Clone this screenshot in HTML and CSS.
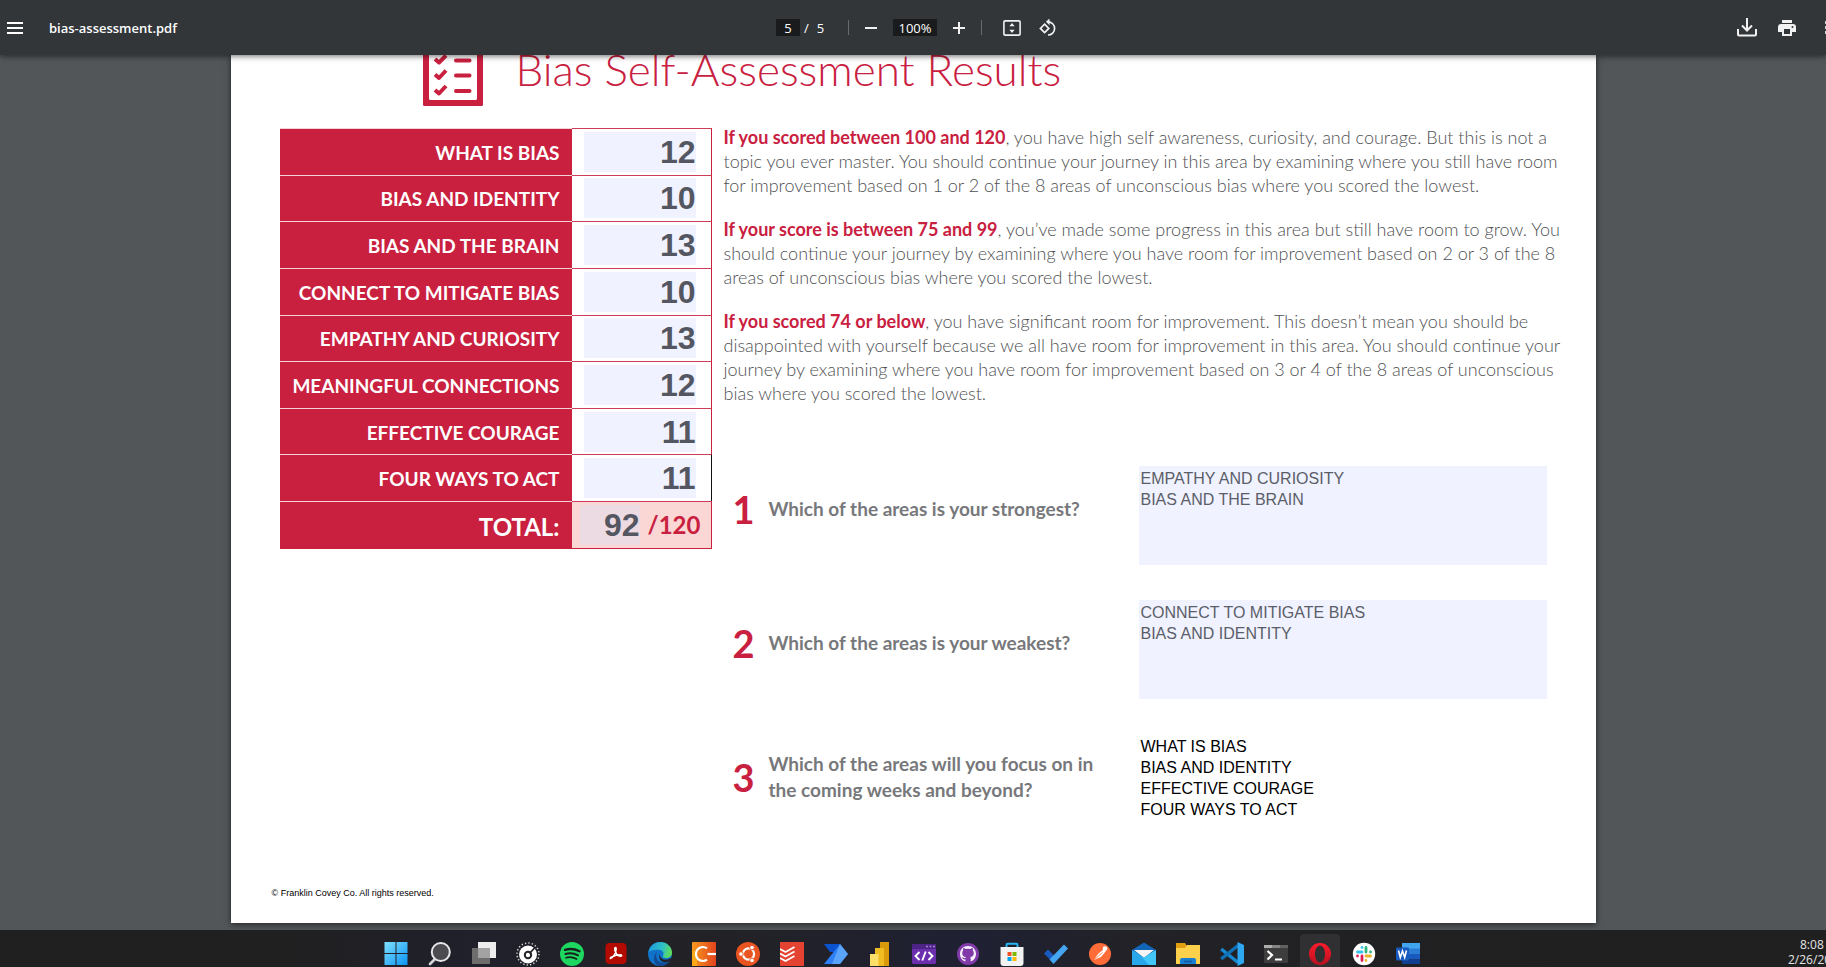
FILE: index.html
```html
<!DOCTYPE html>
<html lang="en">
<head>
<meta charset="utf-8">
<title>bias-assessment.pdf</title>
<link rel="stylesheet" href="styles.css">
</head>
<body>
<header class="toolbar">
  <div class="toolbar-start">
    <button class="tool" aria-label="Menu"><svg width="16" height="12" viewBox="0 0 16 12" fill="#fff"><path d="M0 0h16v2H0zM0 5h16v2H0zM0 10h16v2H0z"/></svg></button>
    <span class="file-name">bias-assessment.pdf</span>
  </div>
  <div class="toolbar-center">
    <input class="page-number" aria-label="Page number" value="5">
    <span class="page-total"><span>/</span><span>5</span></span>
    <span class="separator"></span>
    <button class="tool" aria-label="Zoom out"><svg width="12" height="12" viewBox="0 0 12 12"><path d="M0 6h12" stroke="#f1f1f1" stroke-width="2"/></svg></button>
    <input class="zoom-level" aria-label="Zoom level" value="100%">
    <button class="tool" aria-label="Zoom in"><svg width="12" height="12" viewBox="0 0 12 12"><path d="M0 6h12M6 0v12" stroke="#f1f1f1" stroke-width="2"/></svg></button>
    <span class="separator"></span>
    <button class="tool fit" aria-label="Fit to page"><svg width="18" height="16" viewBox="0 0 18 16"><rect x=".9" y=".9" width="16.2" height="14.2" rx="1.2" fill="none" stroke="#f1f1f1" stroke-width="1.6"/><path d="M9 3l2.6 3.2H6.4zM9 13l2.6-3.2H6.4z" fill="#f1f1f1"/></svg></button>
    <button class="tool rotate" aria-label="Rotate"><svg width="18" height="18" viewBox="0 0 18 18" fill="none" stroke="#f1f1f1" stroke-width="1.7"><path d="M5.6 5.2l4.2 4.2-4.2 4.2-4.2-4.2z"/><path d="M9 2.8a6.6 6.6 0 1 1 0 13.2"/><path d="M10.5-.6v6.8L7 2.8z" fill="#f1f1f1" stroke="none"/></svg></button>
  </div>
  <div class="toolbar-end">
    <button class="tool" aria-label="Download"><svg width="20" height="19" viewBox="0 0 20 19" fill="none" stroke="#f1f1f1" stroke-width="2"><path d="M10 0v12M5 7.5l5 5 5-5"/><path d="M1 11v5.5q0 1 1 1h16q1 0 1-1V11"/></svg></button>
    <button class="tool" aria-label="Print"><svg width="18" height="16" viewBox="0 0 18 16" fill="#f1f1f1"><path d="M4 0h10v3H4z"/><path fill-rule="evenodd" d="M3 4h12q3 0 3 3v5h-4v4H4v-4H0V7q0-3 3-3zm3 5v5h6V9zm8.500-3a1 1 0 1 0 0 2 1 1 0 0 0 0-2z"/></svg></button>
    <button class="tool more" aria-label="More actions"><svg width="2" height="13" viewBox="0 0 2 13" fill="#cfd0d1"><path d="M1 0h1v3H1zM1 5h1v3H1zM1 10h1v3H1z"/></svg></button>
  </div>
</header>

<main class="viewer">
  <article class="sheet">
    <div class="sheet-head">
      <svg class="checklist" width="60" height="51" viewBox="0 0 60 51"><path fill="#c9203f" fill-rule="evenodd" d="M0 0h60v49.500q0 1.500-1.500 1.500h-57Q0 51 0 49.500zM6 0v43.500q0 1.500 1.500 1.500h45q1.500 0 1.500-1.500V0z"/><g fill="none" stroke="#c9203f" stroke-width="4" stroke-linecap="round"><path d="M33 5.500h13.500M33 20.500h13.500M33 36h13.500"/><path stroke-linecap="butt" stroke-linejoin="round" d="M12 4l4 3.500 7-7M12 19.500l4 3.500 7-7.500M12 35l4 3.500 7-7.500"/></g></svg>
      <h1 class="title">Bias Self-Assessment Results</h1>
    </div>

    <div class="content">
      <table class="scores">
        <tbody>
          <tr><th scope="row"><label for="s1">WHAT IS BIAS</label></th><td><input id="s1" value="12"></td></tr>
          <tr><th scope="row"><label for="s2">BIAS AND IDENTITY</label></th><td><input id="s2" value="10"></td></tr>
          <tr><th scope="row"><label for="s3">BIAS AND THE BRAIN</label></th><td><input id="s3" value="13"></td></tr>
          <tr><th scope="row"><label for="s4">CONNECT TO MITIGATE BIAS</label></th><td><input id="s4" value="10"></td></tr>
          <tr><th scope="row"><label for="s5">EMPATHY AND CURIOSITY</label></th><td><input id="s5" value="13"></td></tr>
          <tr><th scope="row"><label for="s6">MEANINGFUL CONNECTIONS</label></th><td><input id="s6" value="12"></td></tr>
          <tr><th scope="row"><label for="s7">EFFECTIVE COURAGE</label></th><td><input id="s7" value="11"></td></tr>
          <tr class="last-area"><th scope="row"><label for="s8">FOUR WAYS TO ACT</label></th><td><input id="s8" value="11"></td></tr>
          <tr class="total"><th scope="row"><label for="total">TOTAL:</label></th><td><div class="total-value"><input id="total" value="92"><span>/120</span></div></td></tr>
        </tbody>
      </table>

      <div class="details">
        <section class="guide">
          <p><strong>If you scored between 100 and 120</strong>, you have high self awareness, curiosity, and courage. But this is not a<br>topic you ever master. You should continue your journey in this area by examining where you still have room<br>for improvement based on 1 or 2 of the 8 areas of unconscious bias where you scored the lowest.</p>
          <p><strong>If your score is between 75 and 99</strong>, you’ve made some progress in this area but still have room to grow. You<br>should continue your journey by examining where you have room for improvement based on 2 or 3 of the 8<br>areas of unconscious bias where you scored the lowest.</p>
          <p><strong>If you scored 74 or below</strong>, you have significant room for improvement. This doesn’t mean you should be<br>disappointed with yourself because we all have room for improvement in this area. You should continue your<br>journey by examining where you have room for improvement based on 3 or 4 of the 8 areas of unconscious<br>bias where you scored the lowest.</p>
        </section>

        <section class="questions">
          <div class="question">
            <span class="number">1</span>
            <label for="q1">Which of the areas is your strongest?</label>
            <textarea id="q1">EMPATHY AND CURIOSITY
BIAS AND THE BRAIN</textarea>
          </div>
          <div class="question">
            <span class="number">2</span>
            <label for="q2">Which of the areas is your weakest?</label>
            <textarea id="q2">CONNECT TO MITIGATE BIAS
BIAS AND IDENTITY</textarea>
          </div>
          <div class="question active">
            <span class="number">3</span>
            <label for="q3">Which of the areas will you focus on in<br>the coming weeks and beyond?</label>
            <textarea id="q3">WHAT IS BIAS
BIAS AND IDENTITY
EFFECTIVE COURAGE
FOUR WAYS TO ACT</textarea>
          </div>
        </section>
      </div>
    </div>
    <footer class="copyright">© Franklin Covey Co. All rights reserved.</footer>
  </article>
</main>

<nav class="taskbar" aria-label="Taskbar">
  <div class="apps">
    <button class="app" aria-label="Start"><svg viewBox="0 0 24 24"><defs><linearGradient id="win" x1="0" y1="0" x2="1" y2="1"><stop offset="0" stop-color="#7fe0ff"/><stop offset="1" stop-color="#0a93f2"/></linearGradient></defs><path fill="url(#win)" d="M.5 0h11v11H.5zM12.500 0h11v11h-11zM.5 12h11v11H.5zM12.500 12h11v11h-11z"/></svg></button>
    <button class="app" aria-label="Search"><svg viewBox="0 0 24 24"><path d="M8 16L2 22" stroke="#d5d5d8" stroke-width="2.600" stroke-linecap="round"/><circle cx="12.800" cy="10" r="9" fill="#4b4b50" stroke="#e6e6e8" stroke-width="2"/></svg></button>
    <button class="app" aria-label="Task view"><svg viewBox="0 0 24 24"><path fill="#ededed" d="M6 0h18v16H6z"/><path fill="#6d6d6e" d="M0 6h18v16H0z"/><path fill="#a2a2a3" d="M6 6h12v10H6z"/></svg></button>
    <button class="app" aria-label="Gauge"><svg viewBox="0 0 24 24"><circle cx="12" cy="12" r="11" fill="none" stroke="#d8d8d8" stroke-width="1.500" stroke-dasharray="1.300 2.156"/><circle cx="12" cy="12.500" r="9" fill="#fff"/><circle cx="12" cy="13" r="3.200" fill="none" stroke="#222227" stroke-width="2"/><path d="M13.500 11.500l5-5.500" stroke="#222227" stroke-width="1.800"/></svg></button>
    <button class="app" aria-label="Spotify"><svg viewBox="0 0 24 24"><circle cx="12" cy="12" r="12" fill="#1ed760"/><g fill="none" stroke="#17201b" stroke-linecap="round"><path stroke-width="2.400" d="M5 7.800q7.500-2.200 14.500 1.400"/><path stroke-width="2" d="M5.500 12q6.500-2 12.500 1.300"/><path stroke-width="1.700" d="M6 15.800q5.500-1.600 10.500 1.200"/></g></svg></button>
    <button class="app" aria-label="Acrobat"><svg viewBox="0 0 24 24"><rect x="1.500" y="1" width="21" height="21" rx="4" fill="#b30b00"/><path fill="none" stroke="#fff" stroke-width="1.500" stroke-linejoin="round" d="M6.500 16.500c2-.2 5.500-5 5.700-9.500.1-2-1.600-2-1.500 0 .2 3.500 3 7.500 6 7.300 1.500-.2 1.200-1.600-.5-1.600-3 0-6 1-8.500 2.300-1.300.7-1.500 1.500-1.200 1.500z"/></svg></button>
    <button class="app" aria-label="Edge"><svg viewBox="0 0 24 24"><defs><linearGradient id="edgeTop" x1="0" y1=".3" x2="1" y2=".5"><stop offset="0" stop-color="#219bdc"/><stop offset=".6" stop-color="#2fc2c4"/><stop offset="1" stop-color="#62dc52"/></linearGradient></defs><circle cx="12" cy="12" r="12" fill="#1172c9"/><path fill="url(#edgeTop)" d="M.5 10C2 3.500 7 0 12 0c7 0 12 5 12 10.500 0 4-3 5.500-5.500 5.500-3 0-4.500-1.200-3.500-2.300 1.500-2.200 0-6-4-6C6 7.500 1.500 9 .5 10z"/><path fill="#124a94" d="M9.500 9.500c-3 4-1 10 4.500 11 3 .5 6-.5 8-2-3 5-8 6-11.500 5.300C5 22 4.500 13 9.500 9.500z"/><path fill="#222227" d="M12 12c-.5 3 2 6 6 5.600 2 0 3-.6 4.500-1.600l1 2q-4 3-8 2c-4-1-5-5-3.500-8z"/></svg></button>
    <button class="app" aria-label="Coding app"><svg viewBox="0 0 24 24"><defs><linearGradient id="cc"><stop offset="0" stop-color="#f8991d"/><stop offset="1" stop-color="#e2431e"/></linearGradient></defs><rect width="24" height="24" rx="1" fill="url(#cc)"/><path d="M0 9h5v15H0z" fill="#fba919"/><path fill="none" stroke="#fff" stroke-width="2.200" d="M15 6.300A7 7 0 1 0 15 17.700"/><path d="M15.500 12H24" stroke="#fff" stroke-width="2.200"/></svg></button>
    <button class="app" aria-label="Ubuntu"><svg viewBox="0 0 24 24"><circle cx="12" cy="12" r="12" fill="#e95420"/><circle cx="12.500" cy="12" r="5.600" fill="none" stroke="#fff" stroke-width="2.200"/><g fill="#fff" stroke="#e95420"><circle cx="5" cy="12" r="2.300"/><circle cx="16" cy="5.600" r="2.300"/><circle cx="16" cy="18.400" r="2.300"/></g></svg></button>
    <button class="app" aria-label="Todoist"><svg viewBox="0 0 24 24"><path fill="#e44332" d="M0 0h24v24H0z"/><path fill="none" stroke="#fff" stroke-width="1.700" d="M0 7l5.500 3L14.500 5M0 11.500l5.500 3 9-5M0 16l5.500 3 9-5"/></svg></button>
    <button class="app" aria-label="Power Automate"><svg viewBox="0 0 24 24"><path fill="#0b53ce" d="M0 2h16v8H6z"/><path fill="#2f7ff5" d="M16 2L0 22h16l8-10z"/><path fill="#7abcff" d="M16 2l8 10-8 10H8z" opacity=".6"/></svg></button>
    <button class="app" aria-label="Power BI"><svg viewBox="0 0 24 24"><path fill="#d99a0b" d="M12 0h9v24h-9z"/><path fill="#efbd22" d="M7 6h9v18H7z"/><path fill="#fbdf69" d="M2 12h8.500v12H2z"/></svg></button>
    <button class="app" aria-label="Dev tools"><svg viewBox="0 0 24 24"><rect y="2" width="24" height="20" rx="1.500" fill="#6b2fae"/><path fill="#4b2486" d="M0 2h24v5H0z"/><path d="M14 4.500h2M17.500 4.500h2M21 4.500h2" stroke="#ad80dc" stroke-width="1.500"/><path fill="none" stroke="#fff" stroke-width="1.900" d="M7.500 10L3.500 14l4 4M16.500 10l4 4-4 4M13.700 9.500l-3.400 9"/></svg></button>
    <button class="app" aria-label="GitHub Desktop"><svg viewBox="0 0 24 24"><circle cx="12" cy="12" r="11" fill="#813ba8"/><path fill="#f5effa" d="M12 4c-4.600 0-8 3.500-8 8 0 3.600 2.200 6.500 5.400 7.600v-2.300c-2.100.4-2.600-.8-3.400-2 1.500-.3 1.700 1.200 3.500.8l.3-1.100c-2-.3-3.600-1.200-3.600-4 0-1 .4-2 1-2.700-.1-.4-.2-1.500.2-2.300 1 0 1.700.5 2.300 1q2.300-.6 4.600 0c.6-.5 1.400-1 2.300-1 .4.800.3 1.900.2 2.300.6.700 1 1.700 1 2.700 0 2.800-1.600 3.700-3.600 4 .5.600.5 1 .5 2v2.600C17.800 18.500 20 15.600 20 12c0-4.500-3.400-8-8-8z"/></svg></button>
    <button class="app" aria-label="Store"><svg viewBox="0 0 24 24"><path d="M6.500 6V3q0-1.300 1.300-1.300h8.400q1.300 0 1.300 1.300v3" fill="none" stroke="#29b6ee" stroke-width="2"/><path d="M.5 5h23v16q0 3-3 3h-17q-3 0-3-3z" fill="#f2f2f2"/><path fill="#f25022" d="M7.500 10H11.500v4h-4z"/><path fill="#7fba00" d="M12.500 10h4v4h-4z"/><path fill="#00a4ef" d="M7.500 15h4v4h-4z"/><path fill="#ffb900" d="M12.500 15h4v4h-4z"/></svg></button>
    <button class="app" aria-label="To Do"><svg viewBox="0 0 24 24"><path fill="#185abd" d="M0 11.500L4 7.500l9.500 9.500-4 4z"/><path fill="#45a5f0" d="M5.500 17.500L20 2.500l4 4L9.500 22z"/></svg></button>
    <button class="app" aria-label="Postman"><svg viewBox="0 0 24 24"><circle cx="12" cy="12" r="11" fill="#ff6c37"/><path fill="#fff" d="M6 18l4-6 6-5 2 2-5 6z"/><circle cx="17" cy="6.500" r="2.300" fill="#fff"/><path d="M6.500 17.500l8-7" stroke="#ff6c37" stroke-width=".8"/></svg></button>
    <button class="app" aria-label="Mail"><svg viewBox="0 0 24 24"><path fill="#1166b8" d="M0 8L12 .5 24 8v5H0z"/><path fill="#f4f4f4" d="M2 8h20l-10 8z"/><path fill="#28a8ea" d="M0 8l12 7.500L24 8v15H0z"/><path fill="#50d9ff" d="M24 8v15h-7L9 14l3 1.500z" opacity=".65"/></svg></button>
    <button class="app" aria-label="File Explorer"><svg viewBox="0 0 24 24"><path fill="#e0a012" d="M0 1h9l2 3v4H0z"/><path fill="#ffd04c" d="M0 6h9l2-3h13v19H0z"/><path fill="#1a7fd0" d="M4 22v-4q0-2 2-2h12q2 0 2 2v4z"/><path d="M8 19.500h8" stroke="#0c5798" stroke-width="1.500"/></svg></button>
    <button class="app" aria-label="Visual Studio Code"><svg viewBox="0 0 24 24"><path fill="none" stroke="#1588d1" stroke-width="3.500" d="M1.200 7L18 20.500"/><path fill="none" stroke="#0f70b5" stroke-width="3.500" d="M1.200 17L18 3.500"/><path fill="#2fa8f2" d="M17.500 0L24 3v18l-6.500 3z"/></svg></button>
    <button class="app" aria-label="Terminal"><svg viewBox="0 0 24 24"><rect y="3" width="24" height="18" rx="1" fill="#3d3d3d"/><path fill="#adadad" d="M0 3h8v3H0z"/><path fill="#858585" d="M8 3h8v3H8z"/><path fill="#626262" d="M16 3h8v3h-8z"/><path fill="none" stroke="#fff" stroke-width="2.200" d="M3.500 9l4.500 4-4.500 4.500M11 17.500h7"/></svg></button>
    <button class="app current" aria-label="Opera"><svg viewBox="0 0 24 24"><defs><linearGradient id="op" x2="0" y2="1"><stop offset="0" stop-color="#ff1b2d"/><stop offset="1" stop-color="#b8101e"/></linearGradient></defs><path fill="url(#op)" fill-rule="evenodd" d="M12 1a11 11 0 1 0 0 22 11 11 0 0 0 0-22zm0 2.500c3 0 5 3.800 5 8.500s-2 8.500-5 8.500-5-3.800-5-8.500 2-8.500 5-8.500z"/></svg></button>
    <button class="app" aria-label="Slack"><svg viewBox="0 0 24 24"><circle cx="12" cy="12" r="11.200" fill="#fff"/><g fill="none" stroke-width="2.800" stroke-linecap="round"><path stroke="#36c5f0" d="M5.500 10h4.500M10 5.500v.1"/><path stroke="#2eb67d" d="M14 5.500V10M18.500 10v.1"/><path stroke="#ecb22e" d="M14 14h4.500M14 18.500v.1"/><path stroke="#e01e5a" d="M10 14v4.500M5.500 14v.1"/></g></svg></button>
    <button class="app" aria-label="Word"><svg viewBox="0 0 24 24"><path fill="#41a5ee" d="M6 1h18v6H6z"/><path fill="#2b7cd3" d="M6 6.500h18V12H6z"/><path fill="#185abd" d="M6 12h18v5.500H6z"/><path fill="#103f91" d="M6 17.500h18V22H6z"/><rect y="5.500" width="13" height="13" rx="1" fill="#185abd"/><path fill="none" stroke="#fff" stroke-width="1.600" d="M2.500 8.500l1.800 7 2.200-6.500 2.200 6.500 1.800-7"/></svg></button>
  </div>
  <div class="clock"><time class="clock-time">8:08</time><time>2/26/20</time></div>
</nav>
</body>
</html>
```
FILE: styles.css
```css
* {
  box-sizing: border-box;
}

body {
  margin: 0;
  height: 100vh;
  display: flex;
  flex-direction: column;
  overflow: hidden;
  background: #525659;
  font-family: "Lato", sans-serif;
}

button,
input,
textarea {
  margin: 0;
  padding: 0;
  border: 0;
  border-radius: 0;
  background: none;
  color: inherit;
  font: inherit;
  outline: 0;
}

button svg {
  display: block;
}

/* Viewer toolbar */
.toolbar {
  position: relative;
  z-index: 1;
  flex: none;
  height: 55px;
  display: grid;
  grid-template-columns: 1fr auto 1fr;
  align-items: center;
  overflow: hidden;
  background: #323639;
  box-shadow: 0 1px 6px rgba(0, 0, 0, 0.6);
  color: #fff;
  font: 13px/18px "Open Sans", sans-serif;
}

.toolbar-start,
.toolbar-center,
.toolbar-end {
  display: flex;
  align-items: center;
}

.toolbar-start {
  gap: 26px;
  padding-left: 7px;
}

.file-name {
  font-weight: 600;
}

.toolbar-center {
  gap: 16px;
  padding-left: 7px;
}

.page-number,
.zoom-level {
  height: 17px;
  background: #191b1c;
  text-align: center;
}

.page-number {
  width: 24px;
}

.zoom-level {
  width: 44px;
}

.page-total {
  display: flex;
  gap: 8px;
  width: 28px;
  margin-left: -12px;
}

.separator {
  width: 1px;
  height: 15px;
  background: #686b6e;
}

.fit {
  margin-left: 5px;
}

.rotate {
  margin-left: 2px;
}

.toolbar-end {
  justify-content: flex-end;
  gap: 21px;
}

.more {
  margin-left: 7px;
}

/* Document */
.viewer {
  flex: 1;
  min-height: 0;
  display: flex;
  justify-content: center;
  padding-bottom: 7px;
  overflow: hidden;
}

.sheet {
  width: 100%;
  max-width: 1365px;
  display: flex;
  flex-direction: column;
  padding: 0 49px 24px 41px;
  background: #fff;
  box-shadow: 0 1px 6px rgba(0, 0, 0, 0.6);
}

.sheet-head {
  display: flex;
  gap: 33px;
  height: 70px;
  padding-left: 151px;
}

.title {
  margin: 0;
  color: #c9203f;
  font-size: 44px;
  font-weight: 300;
  line-height: 28px;
  white-space: nowrap;
}

.content {
  display: grid;
  grid-template-columns: 432px minmax(0, 1fr);
  gap: 12px;
  align-items: start;
  padding-left: 8px;
}

/* Scores */
.scores {
  width: 100%;
  height: 421px;
  margin-top: 3px;
  border-spacing: 0;
  table-layout: fixed;
}

.scores th {
  width: 292px;
  padding: 2px 12px 0 0;
  border-top: 1px solid #f3d3d9;
  background: #c9203f;
  color: #fff;
  font-size: 19px;
  font-weight: 700;
  line-height: 24px;
  text-align: right;
}

.scores td {
  padding: 0 15px 0 12px;
  border-top: 1px solid #cf3c57;
  border-right: 1px solid #c9203f;
}

.scores input {
  display: block;
  width: 100%;
  height: 40px;
  background: #f0f2ff;
  color: #545761;
  font: bold 32px/40px "Liberation Sans", Arial, sans-serif;
  text-align: right;
}

.scores .last-area td {
  border-right-color: #111;
}

.scores .total th {
  font-size: 24px;
}

.scores .total td {
  padding: 0 8px;
  border-bottom: 1px solid #c9203f;
  background: #fad6d4;
}

.total-value {
  display: flex;
  gap: 8px;
  color: #c9203f;
  font-size: 24px;
  font-weight: 700;
  line-height: 40px;
}

.scores .total input {
  width: 60px;
  background: #eddbe3;
}

/* Score guide */
.guide {
  color: #505154;
  font-size: 18px;
  font-weight: 300;
  line-height: 24px;
  white-space: nowrap;
}

.guide p {
  margin: 0 0 20px;
}

.guide strong {
  color: #c9203f;
  font-weight: 700;
}

/* Questions */
.questions {
  display: grid;
  gap: 35px;
  padding-top: 41px;
}

.question {
  display: grid;
  grid-template-columns: 31px 1fr 408px;
  gap: 14px;
  align-items: center;
  color: #77787b;
  font-size: 19px;
  font-weight: 700;
  line-height: 26px;
}

.number,
.question label {
  padding-bottom: 14px;
}

.number {
  color: #c9203f;
  font-size: 38px;
  text-align: right;
}

.question textarea {
  height: 99px;
  padding: 2px;
  overflow: hidden;
  resize: none;
  background: #f0f2ff;
  color: #5b5e68;
  font: 16px/21px "Liberation Sans", Arial, sans-serif;
}

.question.active textarea {
  background: none;
  color: #000;
}

.copyright {
  margin-top: auto;
  color: #000;
  font: 9px/12px "Liberation Sans", Arial, sans-serif;
}

/* Taskbar */
.taskbar {
  flex: none;
  height: 37px;
  display: grid;
  grid-template-columns: 1fr auto 1fr;
  overflow: hidden;
  background: linear-gradient(90deg, #202020 0, #202020 15%, #20202b 25%, #222226 40%, #1f2033 53%, #222227 62%, #202020 85%);
}

.apps {
  grid-column: 2;
  display: flex;
  gap: 4px;
  padding: 4px 22px 0 0;
}

.app {
  display: flex;
  align-items: flex-start;
  width: 40px;
  padding: 8px 8px 0;
  border-radius: 4px 4px 0 0;
}

.app svg {
  width: 24px;
  height: 24px;
}

.app.current {
  background: #303033;
}

.clock {
  justify-self: end;
  width: 38px;
  padding-top: 7px;
  color: #e4e4e4;
  font: 12px/15px "Open Sans", sans-serif;
}

.clock time {
  display: block;
}

.clock-time {
  padding-left: 12px;
}
```
